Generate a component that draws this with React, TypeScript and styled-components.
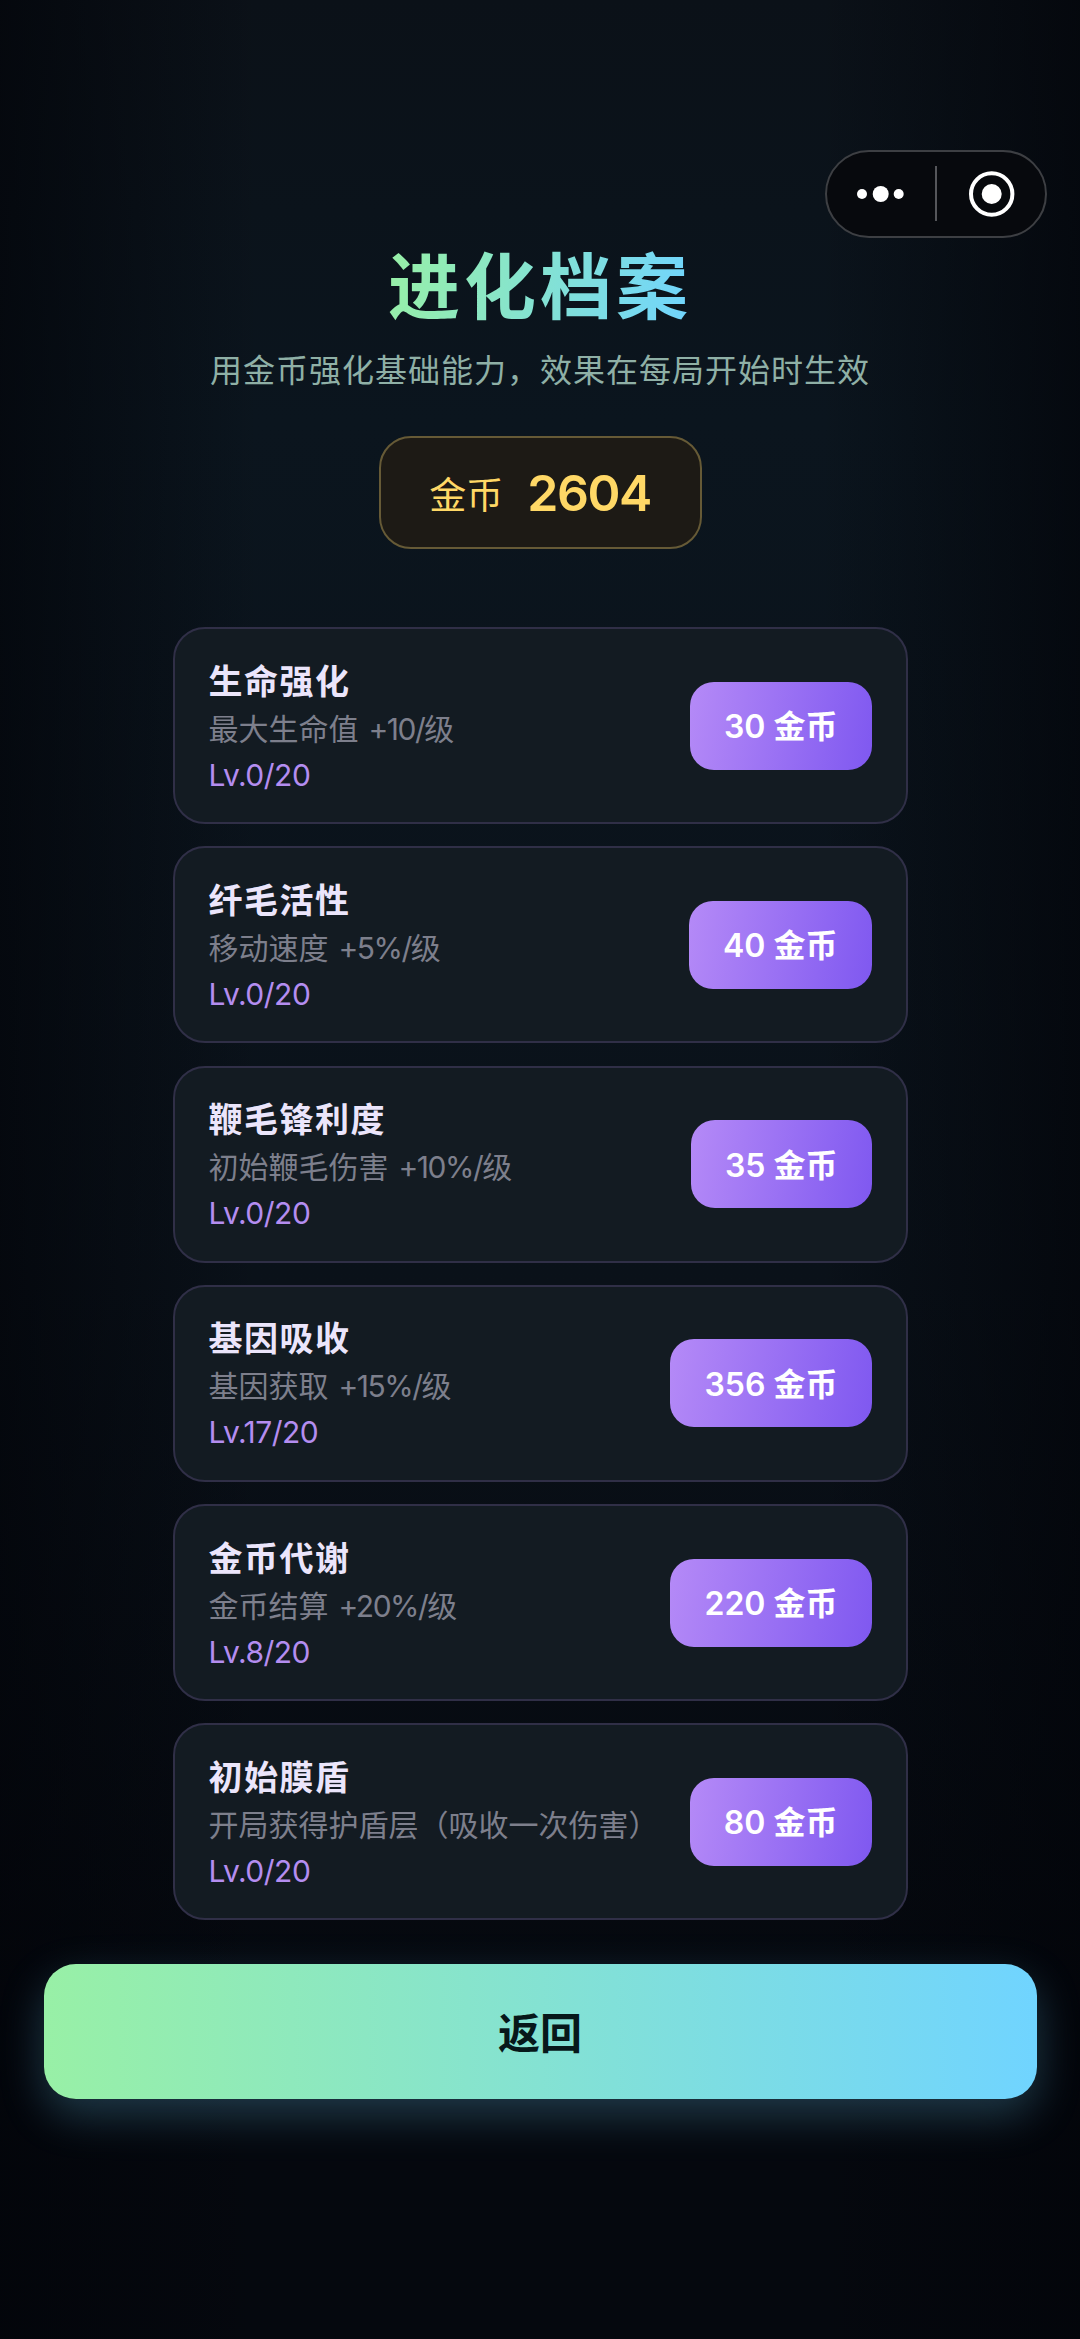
import React from 'react'
import styled, { createGlobalStyle } from 'styled-components'

const upgrades = [
  { name: '生命强化', desc: '最大生命值', stat: '+10/级', level: 'Lv.0/20', price: 30 },
  { name: '纤毛活性', desc: '移动速度', stat: '+5%/级', level: 'Lv.0/20', price: 40 },
  { name: '鞭毛锋利度', desc: '初始鞭毛伤害', stat: '+10%/级', level: 'Lv.0/20', price: 35 },
  { name: '基因吸收', desc: '基因获取', stat: '+15%/级', level: 'Lv.17/20', price: 356 },
  { name: '金币代谢', desc: '金币结算', stat: '+20%/级', level: 'Lv.8/20', price: 220 },
  { name: '初始膜盾', desc: '开局获得护盾层（吸收一次伤害）', stat: '', level: 'Lv.0/20', price: 80 },
]

const GlobalStyle = createGlobalStyle`
  html, body {
    margin: 0;
    padding: 0;
    background: #04070d;
  }
  * {
    box-sizing: border-box;
  }
`

const Page = styled.div`
  position: relative;
  width: 1080px;
  height: 2339px;
  padding-top: 241px;
  overflow: hidden;
  display: flex;
  flex-direction: column;
  align-items: center;
  font-family: "Inter", "Noto Sans CJK SC", sans-serif;
  background:
    linear-gradient(90deg, rgba(2, 4, 9, 0.7) 0%, rgba(2, 4, 9, 0) 24%, rgba(2, 4, 9, 0) 76%, rgba(2, 4, 9, 0.7) 100%),
    linear-gradient(180deg, #0b1118 0%, #0b151e 18%, #0a1119 55%, #05080e 85%, #05080e 100%);
`

const Capsule = styled.div`
  position: absolute;
  top: 150px;
  left: 825px;
  width: 222px;
  height: 88px;
  border: 2px solid #3d3f43;
  border-radius: 44px;
  background: #07090d;
`

const CapsuleIcons = styled.svg`
  display: block;
  width: 100%;
  height: 100%;
`

const Title = styled.h1`
  margin: 0;
  font-size: 72px;
  line-height: 92px;
  font-weight: 700;
  letter-spacing: 4px;
  background: linear-gradient(100deg, #98f0a6 0%, #70d4ff 100%);
  -webkit-background-clip: text;
  background-clip: text;
  color: transparent;
`

const Subtitle = styled.p`
  margin: 15px 0 0;
  font-size: 32px;
  line-height: 46px;
  color: #8fb0a6;
  letter-spacing: 1px;
`

const CoinPill = styled.div`
  margin-top: 42px;
  width: 323px;
  height: 113px;
  display: flex;
  align-items: center;
  justify-content: center;
  gap: 24px;
  border: 2px solid #665a36;
  border-radius: 32px;
  background: #1d1a15;
  color: #ffd866;
`

const CoinLabel = styled.span`
  font-size: 37px;
`

const CoinValue = styled.span`
  font-size: 50px;
  font-weight: 600;
  letter-spacing: -1.5px;
`

const List = styled.div`
  margin-top: 78px;
  width: 735px;
  display: flex;
  flex-direction: column;
  gap: 22.3px;
`

const Card = styled.div`
  height: 197px;
  padding: 0 34px;
  display: flex;
  align-items: center;
  justify-content: space-between;
  border: 2px solid #302f47;
  border-radius: 32px;
  background: #131b22;
`

const Info = styled.div`
  display: flex;
  flex-direction: column;
  padding-top: 4px;
`

const Name = styled.div`
  font-size: 34px;
  line-height: 48px;
  font-weight: 700;
  letter-spacing: 1.5px;
  color: #ebe5fb;
`

const Desc = styled.div`
  display: flex;
  gap: 10px;
  font-size: 30px;
  line-height: 46px;
  color: #7d7f8c;
`

const Stat = styled.span`
  letter-spacing: -1.5px;
`

const Level = styled.div`
  font-size: 30px;
  line-height: 46px;
  font-weight: 400;
  letter-spacing: -0.5px;
  color: #b48df0;
`

const Buy = styled.button`
  height: 88px;
  padding: 0 34px 3px;
  border: 0;
  border-radius: 24px;
  font-family: inherit;
  font-size: 32px;
  font-weight: 600;
  color: #fff;
  background: linear-gradient(100deg, #b58af7 0%, #7f58f0 100%);
`

const BackButton = styled.button`
  margin-top: 44px;
  width: 993px;
  height: 135px;
  padding-bottom: 4px;
  border: 0;
  border-radius: 32px;
  font-family: inherit;
  font-size: 42px;
  font-weight: 700;
  color: #07181a;
  background: linear-gradient(90deg, #98f0a6 0%, #70d4ff 100%);
  box-shadow: 0 16px 44px rgba(112, 212, 255, 0.25);
`

export default function App() {
  return (
    <Page>
      <GlobalStyle />
      <Capsule>
        <CapsuleIcons viewBox="0 0 218 84">
          <circle cx="35" cy="42" r="5" fill="#fff" />
          <circle cx="53.7" cy="42" r="8" fill="#fff" />
          <circle cx="71.7" cy="42" r="5" fill="#fff" />
          <rect x="108" y="14" width="2" height="55" fill="#55565a" />
          <circle cx="164.7" cy="42" r="20.7" fill="none" stroke="#fff" strokeWidth="4" />
          <circle cx="164.7" cy="42" r="10" fill="#fff" />
        </CapsuleIcons>
      </Capsule>
      <Title>进化档案</Title>
      <Subtitle>用金币强化基础能力，效果在每局开始时生效</Subtitle>
      <CoinPill>
        <CoinLabel>金币</CoinLabel>
        <CoinValue>2604</CoinValue>
      </CoinPill>
      <List>
        {upgrades.map((item) => (
          <Card key={item.name}>
            <Info>
              <Name>{item.name}</Name>
              <Desc>
                <span>{item.desc}</span>
                {item.stat && <Stat>{item.stat}</Stat>}
              </Desc>
              <Level>{item.level}</Level>
            </Info>
            <Buy>{item.price} 金币</Buy>
          </Card>
        ))}
      </List>
      <BackButton>返回</BackButton>
    </Page>
  )
}
